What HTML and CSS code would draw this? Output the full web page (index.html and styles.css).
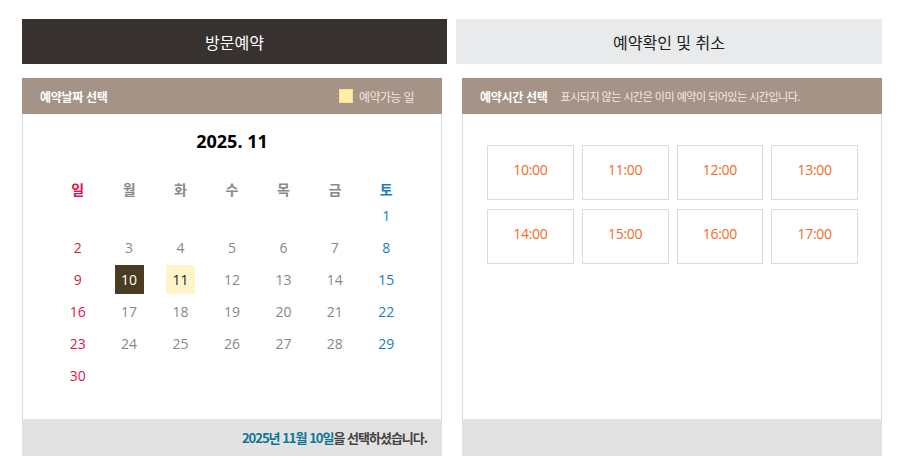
FILE: index.html
```html
<!DOCTYPE html>
<html lang="ko">
<head>
<meta charset="utf-8">
<title>방문예약</title>
<link rel="stylesheet" href="styles.css">
</head>
<body>
<div class="wrap">
  <div class="tabs">
    <div class="tab tab-on">방문예약</div>
    <div class="tab tab-off">예약확인 및 취소</div>
  </div>
  <div class="panels">
    <section class="panel">
      <header class="panel-head">
        <span class="head-title">예약날짜 선택</span>
        <span class="legend"><i class="legend-box"></i>예약가능 일</span>
      </header>
      <div class="panel-body">
        <div class="cal-title">2025. 11</div>
        <div class="cal">
          <div class="dh sun">일</div><div class="dh">월</div><div class="dh">화</div><div class="dh">수</div><div class="dh">목</div><div class="dh">금</div><div class="dh sat">토</div>
          <div class="d"></div><div class="d"></div><div class="d"></div><div class="d"></div><div class="d"></div><div class="d"></div><div class="d sat"><span>1</span></div>
          <div class="d sun"><span>2</span></div><div class="d"><span>3</span></div><div class="d"><span>4</span></div><div class="d"><span>5</span></div><div class="d"><span>6</span></div><div class="d"><span>7</span></div><div class="d sat"><span>8</span></div>
          <div class="d sun"><span>9</span></div><div class="d"><span class="sel">10</span></div><div class="d"><span class="avail">11</span></div><div class="d"><span>12</span></div><div class="d"><span>13</span></div><div class="d"><span>14</span></div><div class="d sat"><span>15</span></div>
          <div class="d sun"><span>16</span></div><div class="d"><span>17</span></div><div class="d"><span>18</span></div><div class="d"><span>19</span></div><div class="d"><span>20</span></div><div class="d"><span>21</span></div><div class="d sat"><span>22</span></div>
          <div class="d sun"><span>23</span></div><div class="d"><span>24</span></div><div class="d"><span>25</span></div><div class="d"><span>26</span></div><div class="d"><span>27</span></div><div class="d"><span>28</span></div><div class="d sat"><span>29</span></div>
          <div class="d sun"><span>30</span></div>
        </div>
      </div>
      <footer class="panel-foot"><b class="hl">2025년 11월 10일</b><b>을 선택하셨습니다.</b></footer>
    </section>
    <section class="panel">
      <header class="panel-head">
        <span class="head-title">예약시간 선택</span>
        <span class="note">표시되지 않는 시간은 이미 예약이 되어있는 시간입니다.</span>
      </header>
      <div class="panel-body">
        <div class="times">
          <div class="slot">10:00</div><div class="slot">11:00</div><div class="slot">12:00</div><div class="slot">13:00</div>
          <div class="slot">14:00</div><div class="slot">15:00</div><div class="slot">16:00</div><div class="slot">17:00</div>
        </div>
      </div>
      <footer class="panel-foot"></footer>
    </section>
  </div>
</div>
</body>
</html>
```
FILE: styles.css
```css
* { box-sizing: border-box; }
html, body { margin: 0; padding: 0; background: #fff; }
body {
  font-family: "Open Sans", "Noto Sans CJK KR", sans-serif;
  color: #333;
}
.wrap {
  width: 860px;
  margin-left: 22px;
  padding-top: 19px;
}
.tabs {
  display: flex;
  justify-content: space-between;
}
.tab {
  height: 45px;
  display: flex;
  align-items: center;
  justify-content: center;
  font-size: 16px;
  font-family: "Noto Sans CJK KR", sans-serif;
}
.tab-on { width: 425px; background: #373230; color: #fff; }
.tab-off { width: 426px; background: #e9eaec; color: #222; }

.panels {
  margin-top: 14px;
  display: flex;
  justify-content: space-between;
}
.panel { width: 420px; }
.panel-head {
  height: 36px;
  background: #a69387;
  display: flex;
  align-items: center;
  padding: 0 28px 0 18px;
  color: #fff;
  font-family: "Noto Sans CJK KR", sans-serif;
}
.head-title { font-size: 12px; font-weight: 700; letter-spacing: -0.3px; }
.legend {
  margin-left: auto;
  display: flex;
  align-items: center;
  font-size: 12px;
  color: #efe6de;
  letter-spacing: -0.6px;
}
.legend-box {
  width: 14px;
  height: 14px;
  background: #fff0a6;
  border: 1px solid #f3e08a;
  margin-right: 6px;
}
.note {
  margin-left: 13px;
  font-size: 11px;
  color: #f1e9e2;
  letter-spacing: -0.5px;
}
.panel-body {
  height: 305px;
  border-left: 1px solid #ddd;
  border-right: 1px solid #ddd;
}
.panel-foot {
  height: 37px;
  background: #e2e2e2;
  display: flex;
  align-items: center;
  justify-content: flex-end;
  padding-right: 15px;
  font-family: "Noto Sans CJK KR", sans-serif;
  font-size: 13px;
  color: #444;
  letter-spacing: -1px;
}
.hl { color: #0c7596; }

.cal-title {
  padding-top: 16px;
  line-height: 22px;
  text-align: center;
  font-size: 18px;
  font-weight: 700;
  color: #000;
}
.cal {
  width: 360px;
  margin: 23px auto 0;
  display: grid;
  grid-template-columns: repeat(7, 1fr);
  grid-template-rows: 24px;
  grid-auto-rows: 32px;
}
.dh {
  height: 24px;
  padding-top: 3px;
  display: flex;
  align-items: center;
  justify-content: center;
  font-family: "Noto Sans CJK KR", sans-serif;
  font-size: 14px;
  font-weight: 700;
  color: #888;
}
.d {
  display: flex;
  align-items: center;
  justify-content: center;
  font-size: 14px;
  color: #888;
}
.d span {
  width: 29px;
  height: 29px;
  display: flex;
  align-items: center;
  justify-content: center;
}
.sun { color: #e0124c; }
.sat { color: #1b7bc4; }
.sel { background: #4a3c22; color: #fff; }
.avail { background: #fff5cc; color: #222; }

.times {
  padding: 31px 23px 0 24px;
  display: grid;
  grid-template-columns: repeat(4, 1fr);
  grid-auto-rows: 55px;
  column-gap: 8px;
  row-gap: 9px;
}
.slot {
  border: 1px solid #dcdcdc;
  padding-bottom: 7px;
  display: flex;
  align-items: center;
  justify-content: center;
  font-size: 14px;
  color: #f26a1e;
  letter-spacing: -0.3px;
}
```
